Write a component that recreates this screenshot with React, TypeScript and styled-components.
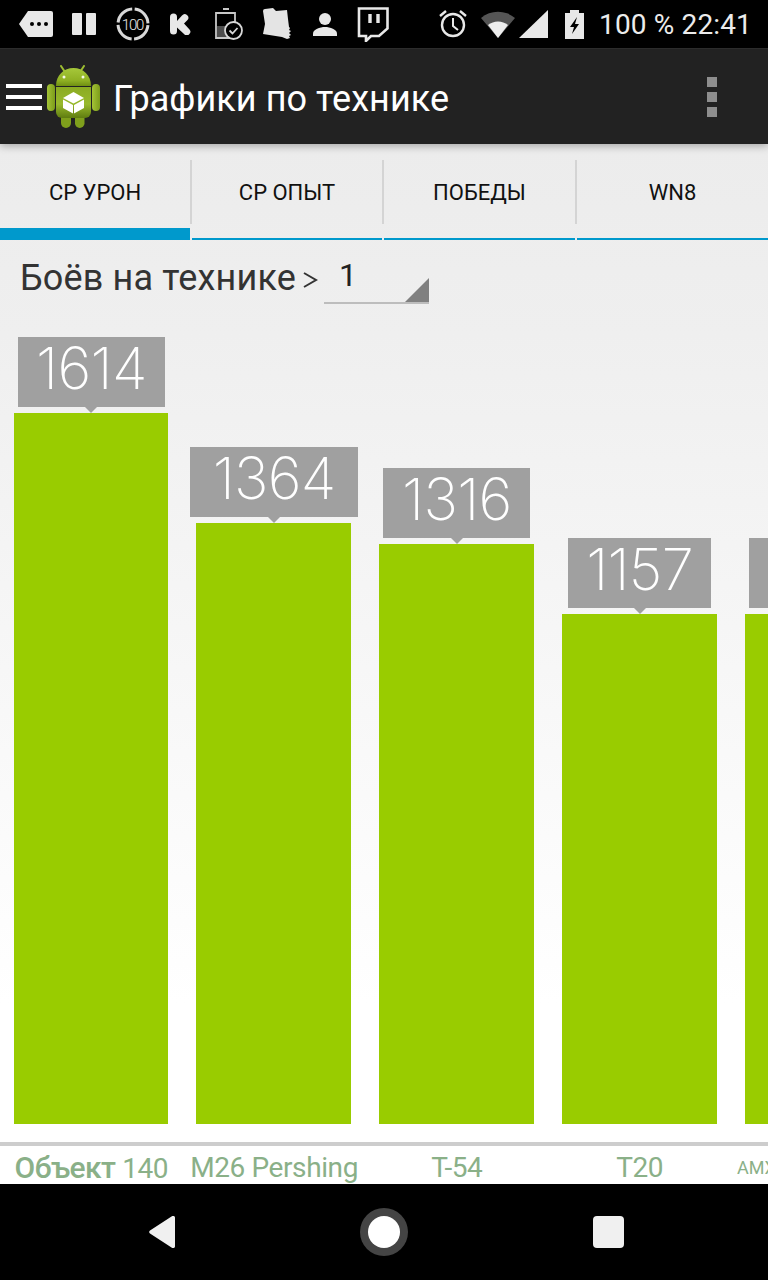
import React from "react";
import styled, { createGlobalStyle } from "styled-components";

const Global = createGlobalStyle`
  html, body { margin: 0; padding: 0; background: #000; }
  #root { width: 768px; height: 1280px; overflow: hidden; }
`;

const Page = styled.div`
  width: 768px;
  height: 1280px;
  display: flex;
  flex-direction: column;
  overflow: hidden;
  font-family: Roboto, "Liberation Sans", sans-serif;
  background: #000;
`;

const StatusBar = styled.div`
  height: 48px;
  flex: none;
  background: #000;
  display: flex;
  align-items: center;
  justify-content: space-between;
`;

const StatusGroup = styled.div`
  display: flex;
  align-items: center;
`;

const StatusIcon = styled.svg<{ $ml: number }>`
  display: block;
  flex: none;
  margin-left: ${(p) => p.$ml}px;
`;

const StatusText = styled.span`
  font-size: 28px;
  letter-spacing: 0.15px;
  color: #ececec;
  margin-left: 15px;
  margin-right: 16px;
  white-space: pre;
`;

const AppBar = styled.header`
  height: 96px;
  flex: none;
  box-sizing: border-box;
  background: #222;
  border-top: 1px solid #2c2c2c;
  display: flex;
  align-items: center;
  padding: 0 51px 0 6px;
  position: relative;
  z-index: 1;
  box-shadow: 0 2px 8px rgba(0, 0, 0, 0.3);
`;

const Burger = styled.div`
  width: 36px;
  height: 26px;
  display: flex;
  flex-direction: column;
  justify-content: space-between;
  flex: none;
`;

const BurgerLine = styled.span`
  height: 4px;
  background: #fff;
`;

const Logo = styled.svg`
  flex: none;
  display: block;
  margin-left: 4px;
`;

const Title = styled.h1`
  font-size: 36px;
  font-weight: 400;
  letter-spacing: 0.05px;
  color: #fff;
  margin: 0 0 0 11px;
  padding-top: 4px;
  flex: 1;
  white-space: nowrap;
`;

const Overflow = styled.div`
  display: flex;
  flex-direction: column;
  gap: 5px;
`;

const Dot = styled.span`
  width: 10px;
  height: 10px;
  background: #8e8e8e;
`;

const Content = styled.main`
  flex: 1;
  display: flex;
  flex-direction: column;
  min-height: 0;
  background: linear-gradient(#ececec 0, #efefef 190px, #fff 860px);
`;

const Tabs = styled.nav`
  height: 96px;
  flex: none;
  box-sizing: border-box;
  padding-top: 16px;
  display: grid;
  grid-template-columns: 190px 190px 191px 191px;
  column-gap: 2px;
`;

const Tab = styled.div`
  display: flex;
  flex-direction: column;
  position: relative;
`;

const TabBody = styled.div`
  height: 64px;
  flex: none;
  display: flex;
  align-items: center;
  justify-content: center;
  font-size: 22px;
  color: #111;
  position: relative;
`;

const TabDivider = styled.span`
  position: absolute;
  right: -2px;
  top: 0;
  bottom: 0;
  width: 2px;
  background: #d4d4d4;
`;

const TabLine = styled.div<{ $active?: boolean }>`
  position: absolute;
  left: 0;
  right: 0;
  bottom: 0;
  height: ${(p) => (p.$active ? 12 : 2)}px;
  background: #0099cc;
`;

const FilterRow = styled.div`
  height: 72px;
  flex: none;
  display: flex;
  align-items: center;
  padding-left: 20px;
  color: #333;
`;

const FilterLabel = styled.span`
  font-size: 36px;
  letter-spacing: 0.15px;
  padding-top: 3px;
  white-space: nowrap;
`;

const Chevron = styled.svg`
  margin-left: 7px;
  margin-top: 7px;
  display: block;
`;

const Spinner = styled.div`
  width: 105px;
  height: 53px;
  margin-left: 6px;
  margin-top: 2px;
  box-sizing: border-box;
  border-bottom: 2px solid #bdbdbd;
  position: relative;
  padding: 0 0 0 15px;
  font-size: 32px;
  line-height: 48px;
  color: #222;
`;

const Corner = styled.span`
  position: absolute;
  right: 0;
  bottom: 0;
  width: 0;
  height: 0;
  border-style: solid;
  border-width: 0 0 24px 24px;
  border-color: transparent transparent #808080 transparent;
`;

const Chart = styled.section`
  flex: 1;
  min-height: 0;
  display: flex;
  flex-direction: column;
`;

const Plot = styled.div`
  height: 812px;
  flex: none;
  display: flex;
  align-items: flex-end;
  border-bottom: 4px solid #cdcdcd;
  padding-bottom: 18px;
  overflow: hidden;
`;

const Column = styled.div`
  width: 182.75px;
  flex: none;
  box-sizing: border-box;
  padding: 0 14px;
  display: flex;
  flex-direction: column;
  align-items: center;
  &:first-child {
    margin-left: -0.5px;
  }
`;

const Tip = styled.div<{ $w: number }>`
  width: ${(p) => p.$w}px;
  height: 70px;
  flex: none;
  box-sizing: border-box;
  padding-bottom: 8px;
  background: #a0a0a0;
  color: #fff;
  display: flex;
  align-items: center;
  justify-content: center;
  font-family: Inter, sans-serif;
  font-weight: 200;
  font-size: 58px;
  letter-spacing: -0.7px;
  position: relative;
  margin: 0 0 6px 1px;
  &::after {
    content: "";
    position: absolute;
    left: 50%;
    bottom: -6px;
    margin-left: -6px;
    border-style: solid;
    border-width: 6px 6px 0;
    border-color: #a0a0a0 transparent transparent;
  }
`;

const Bar = styled.div`
  width: 100%;
  background: #99cc00;
  flex: none;
`;

const Labels = styled.div`
  height: 38px;
  flex: none;
  display: flex;
  background: #fff;
  overflow: hidden;
`;

const Label = styled.div<{ $small?: boolean }>`
  width: 182.75px;
  flex: none;
  box-sizing: border-box;
  text-align: ${(p) => (p.$small ? "left" : "center")};
  padding-left: ${(p) => (p.$small ? 6 : 0)}px;
  font-family: Roboto, sans-serif;
  font-weight: 400;
  font-size: ${(p) => (p.$small ? 18 : 28)}px;
  letter-spacing: ${(p) => (p.$small ? 0 : -0.4)}px;
  line-height: 44px;
  color: #8ab088;
  white-space: nowrap;
`;

const LabelStrong = styled.span`
  font-weight: 500;
  font-size: 30px;
  letter-spacing: -0.6px;
`;

const NavBar = styled.footer`
  height: 96px;
  flex: none;
  box-sizing: border-box;
  padding-left: 149px;
  background: #000;
  display: flex;
  align-items: center;
  gap: 185px;
`;

const NavIcon = styled.svg`
  display: block;
  flex: none;
`;

const tabs = ["СР УРОН", "СР ОПЫТ", "ПОБЕДЫ", "WN8"];
const bars = [
  { v: "1614", h: 711, w: 147, l: "140" },
  { v: "1364", h: 601, w: 168, l: "M26 Pershing" },
  { v: "1316", h: 580, w: 147, l: "T-54" },
  { v: "1157", h: 510, w: 143, l: "T20" },
  { v: "", h: 510, w: 147, l: "AMX" },
];

function AndroidLogo() {
  return (
    <Logo width="56" height="64" viewBox="46 64 56 64">
      <defs>
        <linearGradient id="droidHead" x1="0" y1="0" x2="0" y2="1">
          <stop offset="0" stopColor="#a6c83a" />
          <stop offset="0.7" stopColor="#8fb023" />
          <stop offset="1" stopColor="#6f8f12" />
        </linearGradient>
        <linearGradient id="droidBody" x1="0" y1="0" x2="0" y2="1">
          <stop offset="0" stopColor="#8bab22" />
          <stop offset="0.55" stopColor="#98b92c" />
          <stop offset="1" stopColor="#5f7c10" />
        </linearGradient>
        <linearGradient id="droidArm" x1="0" y1="0" x2="1" y2="0">
          <stop offset="0" stopColor="#a4c436" />
          <stop offset="1" stopColor="#7c9c1a" />
        </linearGradient>
      </defs>
      <path d="M61 65l4 6M84 65l-4 6" stroke="#9dbd32" strokeWidth="2" strokeLinecap="round" />
      <path d="M56 85c0-11 8-18 17.500-18S91 74 91 85z" fill="url(#droidHead)" />
      <circle cx="64" cy="76" r="1.500" fill="#f4f8e4" />
      <circle cx="83" cy="76" r="1.500" fill="#f4f8e4" />
      <rect x="47" y="83" width="8" height="27" rx="4" fill="url(#droidArm)" />
      <rect x="92" y="83" width="8" height="27" rx="4" fill="url(#droidArm)" />
      <rect x="61" y="110" width="10" height="17" rx="5" fill="#7f9f1c" />
      <rect x="75" y="110" width="9.500" height="17" rx="4.700" fill="#7f9f1c" />
      <path d="M56 86h35v25a6 6 0 0 1-6 6H62a6 6 0 0 1-6-6z" fill="url(#droidBody)" />
      <path d="M73.500 91l10.500 6-10.500 5.500L63 97z" fill="#fff" />
      <path d="M63 98.500l10 5.500v8.500l-10-5.500zM74 104l10-5.500v8.500l-10 5.500z" fill="#fff" />
    </Logo>
  );
}

export default function App() {
  return (
    <Page>
      <Global />
      <StatusBar>
        <StatusGroup>
          <StatusIcon $ml={19} width="34" height="26" viewBox="0 0 34 26">
            <path d="M9 0h23a2 2 0 0 1 2 2v22a2 2 0 0 1-2 2H9L0 13z" fill="#e8e8e8" />
            <circle cx="13" cy="13" r="2" fill="#000" />
            <circle cx="20" cy="13" r="2" fill="#000" />
            <circle cx="27" cy="13" r="2" fill="#000" />
          </StatusIcon>
          <StatusIcon $ml={19} width="24" height="22" viewBox="0 0 24 22">
            <rect width="10" height="22" rx="1" fill="#e8e8e8" />
            <rect x="14" width="10" height="22" rx="1" fill="#e8e8e8" />
          </StatusIcon>
          <StatusIcon $ml={20} width="34" height="34" viewBox="0 0 34 34">
            <circle cx="17" cy="17" r="15" fill="none" stroke="#d8d8d8" strokeWidth="3" strokeDasharray="21 2.56" strokeDashoffset="-1.28" />
            <text x="16.5" y="22.500" textAnchor="middle" fontSize="15" fontWeight="300" fontFamily="Roboto" fill="#e8e8e8" letterSpacing="-1.2">100</text>
          </StatusIcon>
          <StatusIcon $ml={19} width="22" height="22" viewBox="0 0 22 22">
            <path d="M1 4a3.500 3.500 0 0 1 7 0v4l5-5.500a3.500 3.500 0 0 1 5.500 4.500L15 10.500l5.500 6a3.500 3.500 0 0 1-5.500 4.500L8 14.500V18a3.500 3.500 0 0 1-7 0z" fill="#e8e8e8" />
          </StatusIcon>
          <StatusIcon $ml={24} width="28" height="32" viewBox="0 0 28 32">
            <path d="M8 1h6M1 5h19v25H1z" fill="none" stroke="#c8c8c8" strokeWidth="1.8" />
            <path d="M2 18h11v11H2z" fill="#999" opacity="0.5" />
            <circle cx="18.500" cy="22.500" r="8.500" fill="#000" stroke="#d8d8d8" strokeWidth="1.800" />
            <path d="M14.500 22.500l3 3 5-5.500" fill="none" stroke="#d8d8d8" strokeWidth="1.800" />
          </StatusIcon>
          <StatusIcon $ml={19} width="30" height="32" viewBox="0 0 30 32">
            <path d="M1 3q0-2 2-2l8-1 3 3 11-1 1 9 1 8 1 1-1 2 2 1-2 2 2 2-2 1 1 2-3 1-5-2-19-3 2-10z" fill="#e4e4e4" />
          </StatusIcon>
          <StatusIcon $ml={21} width="24" height="23" viewBox="0 0 24 23">
            <circle cx="12" cy="6" r="6" fill="#e8e8e8" />
            <path d="M0 23v-2.500c0-4 7-6.500 12-6.500s12 2.500 12 6.500V23z" fill="#e8e8e8" />
          </StatusIcon>
          <StatusIcon $ml={20} width="32" height="35" viewBox="0 0 32 35">
            <path d="M2 1.500h28.500v20l-8.500 7.500h-8l-5 5v-5H2z" fill="none" stroke="#e8e8e8" strokeWidth="2.600" />
            <path d="M13 7v9M21 7v9" stroke="#e8e8e8" strokeWidth="3.400" />
          </StatusIcon>
        </StatusGroup>
        <StatusGroup>
          <StatusIcon $ml={0} width="28" height="28" viewBox="0 0 28 28">
            <circle cx="14" cy="15" r="11" fill="none" stroke="#e8e8e8" strokeWidth="2.400" />
            <path d="M14 8v8l5 4" fill="none" stroke="#e8e8e8" strokeWidth="2" />
            <path d="M1 6l6-5M27 6l-6-5" stroke="#e8e8e8" strokeWidth="2.400" />
          </StatusIcon>
          <StatusIcon $ml={14} width="34" height="28" viewBox="0 0 34 28">
            <path d="M0 8a26 26 0 0 1 34 0L17 28z" fill="#555" />
            <path d="M7 15a16 16 0 0 1 20 0L17 28z" fill="#eee" />
          </StatusIcon>
          <StatusIcon $ml={4} width="29" height="28" viewBox="0 0 29 28">
            <path d="M29 0v28H0z" fill="#e8e8e8" />
          </StatusIcon>
          <StatusIcon $ml={17} width="19" height="29" viewBox="0 0 19 29">
            <path d="M5 0h9v3h5v26H0V3h5z" fill="#e8e8e8" />
            <path d="M12 7l-7 10h4l-2 7 7-10h-4z" fill="#000" />
          </StatusIcon>
          <StatusText>100 % 22:41</StatusText>
        </StatusGroup>
      </StatusBar>
      <AppBar>
        <Burger>
          <BurgerLine />
          <BurgerLine />
          <BurgerLine />
        </Burger>
        <AndroidLogo />
        <Title>Графики по технике</Title>
        <Overflow>
          <Dot />
          <Dot />
          <Dot />
        </Overflow>
      </AppBar>
      <Content>
        <Tabs>
          {tabs.map((t, i) => (
            <Tab key={t}>
              <TabBody>
                {t}
                {i < 3 && <TabDivider />}
              </TabBody>
              <TabLine $active={i === 0} />
            </Tab>
          ))}
        </Tabs>
        <FilterRow>
          <FilterLabel>Боёв на технике</FilterLabel>
          <Chevron width="15" height="18" viewBox="0 0 15 18">
            <path d="M1 2l12 7-12 7" fill="none" stroke="#333" strokeWidth="2" />
          </Chevron>
          <Spinner>
            1
            <Corner />
          </Spinner>
        </FilterRow>
        <Chart>
          <Plot>
            {bars.map((b, i) => (
              <Column key={i}>
                <Tip $w={b.w}>{b.v}</Tip>
                <Bar style={{ height: b.h }} />
              </Column>
            ))}
          </Plot>
          <Labels>
            {bars.map((b, i) => (
              <Label key={i} $small={i === 4}>
                {i === 0 && <LabelStrong>Объект </LabelStrong>}
                {b.l}
              </Label>
            ))}
          </Labels>
        </Chart>
      </Content>
      <NavBar>
        <NavIcon width="26" height="32" viewBox="0 0 26 32">
          <path d="M1 14.500L22.500 0.600a2 2 0 0 1 3.500 1.500v27.800a2 2 0 0 1-3.500 1.500L1 17.500a2 2 0 0 1 0-3z" fill="#f0f0f0" />
        </NavIcon>
        <NavIcon width="48" height="48" viewBox="0 0 48 48">
          <circle cx="24" cy="24" r="24" fill="#444" />
          <circle cx="24" cy="24" r="16" fill="#fff" />
        </NavIcon>
        <NavIcon width="31" height="32" viewBox="0 0 31 32">
          <rect width="31" height="32" rx="4" fill="#f0f0f0" />
        </NavIcon>
      </NavBar>
    </Page>
  );
}
